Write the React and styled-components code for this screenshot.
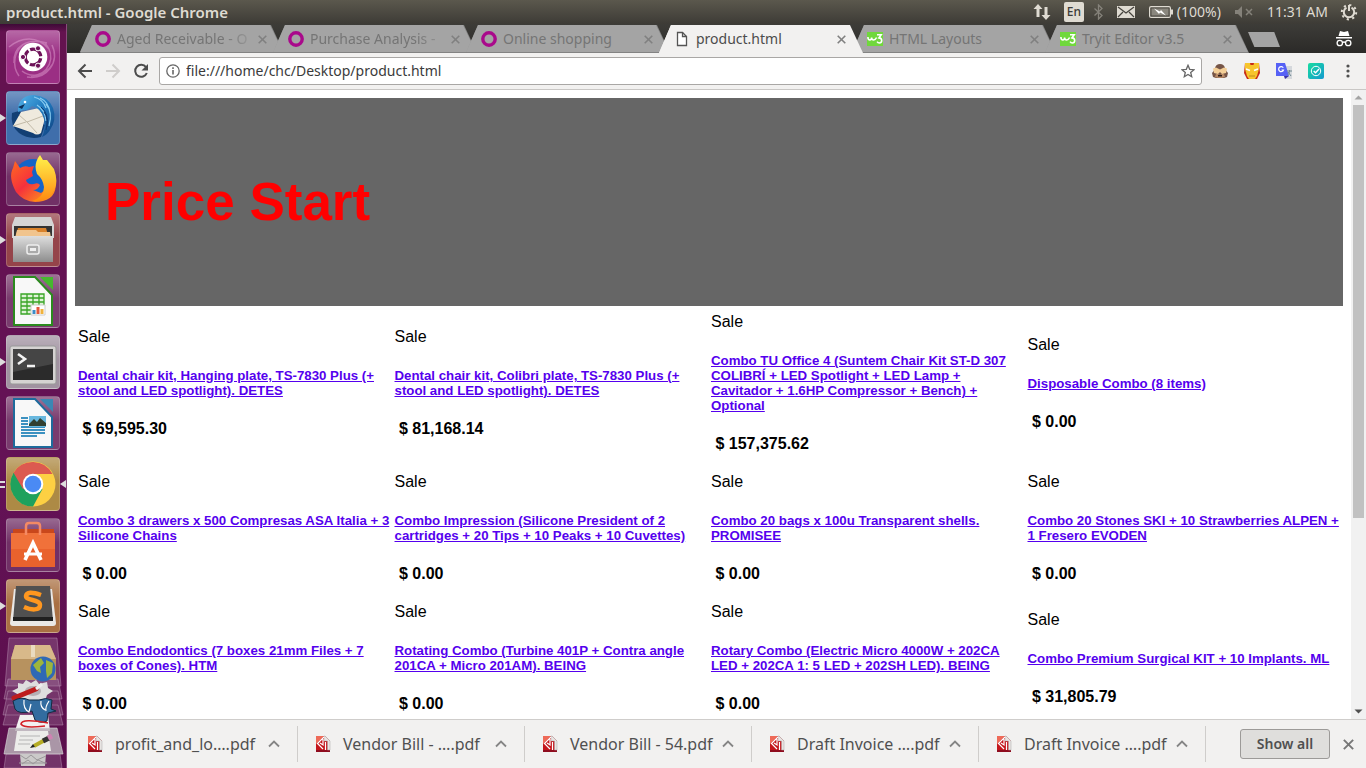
import React from "react";
import styled, { createGlobalStyle, css } from "styled-components";

const Global = createGlobalStyle`
  * { box-sizing: border-box; }
  html, body, #root { margin: 0; height: 100%; }
  body { font-family: "Noto Sans", "Open Sans", sans-serif; background: #fff; overflow: hidden; }
  button { font: inherit; color: inherit; background: none; border: 0; padding: 0; margin: 0; display: flex; }
  svg { display: block; flex: none; }
`;

const ui = `"Noto Sans", "Open Sans", sans-serif`;

/* ---------- desktop shell ---------- */

const Desktop = styled.div`
  display: flex;
  flex-direction: column;
  height: 100vh;
`;

const Panel = styled.header`
  flex: 0 0 24px;
  display: flex;
  align-items: center;
  justify-content: space-between;
  padding: 0 8px 0 6px;
  color: #dfdbd2;
  background: linear-gradient(#5b584d, #3d3b36);
  font: 14px/24px ${ui};
`;

const WindowTitle = styled.div`
  font-size: 15px;
  font-weight: 600;
`;

const Indicators = styled.div`
  display: flex;
  align-items: center;
`;

const Indicator = styled.button`
  align-items: center;
  gap: 4px;
  margin-left: ${(p) => p.$gap || 14}px;
`;

const Keyboard = styled.span`
  width: 20px;
  height: 20px;
  border-radius: 2px;
  background: #dfdbd2;
  color: #3c3b37;
  text-align: center;
  font-size: 12px;
  font-weight: 500;
  line-height: 20px;
`;

const Work = styled.div`
  flex: 1;
  min-height: 0;
  display: flex;
`;

const Launcher = styled.nav`
  flex: 0 0 67px;
  display: flex;
  flex-direction: column;
  align-items: center;
  gap: 7px;
  padding: 6px 1px 0 0;
  overflow: hidden;
  background: linear-gradient(#3e0a37, #64124f 8px, #641256 60%, #5a0f4c);
  border-right: 1px solid #8a4a7c;
`;

const LaunchItem = styled.div`
  position: relative;
  flex: none;
  width: 66px;
  padding-left: 6px;
`;

const LaunchButton = styled.button`
  width: 54px;
  height: 54px;
  border-radius: 4px;
  border: 1px solid rgba(255, 255, 255, 0.18);
  background: ${(p) => p.$bg};
  align-items: center;
  justify-content: center;
  overflow: hidden;
`;

const Marker = styled.span`
  position: absolute;
  top: 23px;
  border: 4px solid transparent;
  ${(p) =>
    p.$side === "right"
      ? css`right: 0; border-right: 6px solid #ddd; border-left: 0;`
      : css`left: 0; border-left: 6px solid #ddd; border-right: 0;`}
`;

const Pips = styled.span`
  position: absolute;
  left: 0;
  top: 24px;
  width: 5px;
  height: 7px;
  border: solid #ddd;
  border-width: 2px 0;
`;

const StackArt = styled.svg`
  overflow: visible;
`;

/* ---------- browser ---------- */

const Browser = styled.main`
  flex: 1;
  min-width: 0;
  display: flex;
  flex-direction: column;
`;

const TabStrip = styled.div`
  flex: 0 0 29px;
  display: flex;
  padding: 1px 13px 0 13px;
  background: linear-gradient(#3d3c38, #2b2a28);
`;

const Tab = styled.div`
  position: relative;
  flex: 0 1 204px;
  min-width: 0;
  margin-right: -11px;
  padding: 0 17px 0 15px;
  display: flex;
  align-items: center;
  z-index: ${(p) => (p.$active ? 2 : 1)};
  color: ${(p) => (p.$active ? "#4c4c4c" : "#757575")};
  font: 14px/28px ${ui};
  &::before, &::after {
    content: "";
    position: absolute;
    inset: 0;
    z-index: -1;
    clip-path: polygon(0 100%, 12px 0, calc(100% - 13px) 0, 100% 100%);
    background: ${(p) => (p.$active ? "#f2f1f0" : "#838383")};
  }
  &::after {
    right: 1px;
    bottom: ${(p) => (p.$active ? 0 : 1)}px;
    background: ${(p) => (p.$active ? "#f2f1f0" : "#a4a4a4")};
  }
`;

const TabTitle = styled.span`
  flex: 1;
  margin: 0 8px 0 6px;
  white-space: nowrap;
  ${(p) => p.$fade && css`mask-image: linear-gradient(90deg, #000 80%, rgba(0, 0, 0, 0.25));`}
`;

const NewTab = styled.button`
  width: 32px;
  height: 15px;
  margin: 7px auto 0 10px;
  clip-path: polygon(0 0, 82% 0, 100% 100%, 20% 100%);
  background: #a4a4a4;
`;

const Incognito = styled.div`
  align-self: center;
`;

const Toolbar = styled.div`
  flex: 0 0 37px;
  display: flex;
  align-items: center;
  gap: 10px;
  padding: 0 10px;
  background: #f2f1f0;
  border-bottom: 1px solid #c9c7c5;
`;

const NavButtons = styled.div`
  display: flex;
  gap: 12px;
`;

const Address = styled.label`
  flex: 1;
  display: flex;
  align-items: center;
  gap: 6px;
  height: 28px;
  padding: 0 6px;
  border: 1px solid #a9a7a5;
  border-radius: 3px;
  background: #fff;
`;

const UrlInput = styled.input`
  flex: 1;
  min-width: 0;
  padding: 0;
  border: 0;
  outline: 0;
  background: none;
  color: #3b3b3b;
  font: 14px/20px ${ui};
`;

const Extensions = styled.div`
  display: flex;
  align-items: center;
  gap: 16px;
`;

const Viewport = styled.div`
  flex: 1;
  min-height: 0;
  display: flex;
  background: #fff;
`;

const Scroller = styled.div`
  flex: 1;
  min-width: 0;
  overflow-y: auto;
  scrollbar-width: none;
  padding: 8px;
  color: #000;
  font: 16px/18px "Liberation Sans", Arial, sans-serif;
`;

const Scrollbar = styled.div`
  flex: 0 0 15px;
  display: flex;
  flex-direction: column;
  align-items: center;
  background: #f1f1f1;
`;

const ScrollArrow = styled.button`
  flex: 0 0 15px;
  align-items: center;
`;

const Track = styled.div`
  flex: 1;
`;

const Thumb = styled.div`
  width: 11px;
  height: 69%;
  background: #c1c1c1;
`;

/* ---------- web page ---------- */

const Banner = styled.section`
  display: flex;
  align-items: center;
  height: 208px;
  margin-bottom: 2px;
  padding: 0 30px;
  background: #666;
`;

const BannerTitle = styled.h1`
  margin: 0;
  color: #f00;
  font-size: 53px;
  line-height: 62px;
`;

const Products = styled.table`
  width: 100%;
  table-layout: fixed;
  border-spacing: 2px;
`;

const Cell = styled.td`
  padding: 3px 1px 15px;
  vertical-align: middle;
`;

const ProductName = styled.h5`
  margin: 22px 0;
  line-height: 15px;
`;

const ProductLink = styled.a`
  color: #50e;
`;

const Price = styled.b`
  display: block;
  white-space: pre;
`;

/* ---------- download shelf ---------- */

const Shelf = styled.footer`
  flex: 0 0 49px;
  display: flex;
  align-items: center;
  padding-right: 12px;
  background: #f2f1f0;
  border-top: 1px solid #cfcdcb;
  color: #505050;
`;

const Download = styled.div`
  flex: 0 1 227px;
  min-width: 0;
  display: flex;
  align-items: center;
  height: 36px;
  padding: 0 17px;
  border-right: 1px solid #cfcdcb;
  font: 16px/36px ${ui};
  &:first-child { flex-basis: 231px; padding-left: 20px; }
`;

const FileName = styled.span`
  flex: 1;
  min-width: 0;
  margin-left: 12px;
  white-space: nowrap;
`;

const ShowAll = styled.button`
  width: 90px;
  height: 30px;
  margin: 0 13px 0 auto;
  align-items: center;
  justify-content: center;
  border: 1px solid #9c9a98;
  border-radius: 3px;
  background: #dfdedc;
  font: 600 14px/20px ${ui};
`;

/* ---------- small icons ---------- */

const Cross = ({ size = 9, color = "#808080", w = 1.6 }) => (
  <svg width={size} height={size} viewBox="0 0 9 9" fill="none" stroke={color} strokeWidth={w}>
    <path d="M.7.7l7.6 7.6M8.3.7L.7 8.3" />
  </svg>
);

const Favicon = ({ kind }) => {
  if (kind === "odoo")
    return (
      <svg width="16" height="16" viewBox="0 0 16 16">
        <circle cx="8" cy="8" r="6.2" fill="none" stroke="#a9098b" strokeWidth="3.4" />
      </svg>
    );
  if (kind === "file")
    return (
      <svg width="16" height="16" viewBox="0 0 16 16" fill="#fff" stroke="#555" strokeWidth="1.3">
        <path d="M3.5 1.5h5l4 4v9h-9z" />
        <path d="M8.5 1.5v4h4" fill="none" />
      </svg>
    );
  return (
    <svg width="16" height="16" viewBox="0 0 16 16" fill="none" stroke="#fff" strokeWidth="1.600">
      <path d="M0 1h16v14H0z" fill="#70d83c" stroke="none" />
      <path d="M.9 6c0 2 .8 3 2 3s1.700-1 1.700-2.500C4.600 8 5.400 9 6.600 9s2.200-.8 3-2.500" />
      <path d="M10 3.800h4.200L12 6.900q2.700.2 2.700 2.600T12.300 12q-1.500 0-2.200-1.300" />
    </svg>
  );
};

const PdfIcon = () => (
  <svg width="16" height="18" viewBox="0 0 16 18">
    <path d="M1 1h9l5 5v11H1z" fill="#c4161c" />
    <path d="M1 1h8L1 9z" fill="#ee6a58" />
    <path d="M11 15h4v2H1v-2z" fill="#8f0c1e" />
    <path d="M9 1h1l5 5v9h-2.500V6H9z" fill="#e8e4e2" stroke="#aaa" strokeWidth=".5" />
    <path d="M9 2L2.500 8.500 8 14M8 4v6l-3-2M10.500 7v8" fill="none" stroke="#fff" strokeWidth="1.200" />
  </svg>
);

const Chevron = () => (
  <svg width="12" height="8" viewBox="0 0 12 8" fill="none" stroke="#858585" strokeWidth="1.800">
    <path d="M1 6.500l5-5 5 5" />
  </svg>
);

const Triangle = ({ down }) => (
  <svg width="9" height="5" viewBox="0 0 9 5">
    <path d={down ? "M.5.5h8l-4 4z" : "M.5 4.500h8l-4-4z"} fill={down ? "#505050" : "#a3a3a3"} />
  </svg>
);

/* ---------- launcher icons ---------- */

const Ubuntu = () => (
  <svg width="52" height="52" viewBox="0 0 52 52" fill="none">
    <g stroke="#e6a9d8" strokeOpacity=".45" strokeWidth="1.500">
      <path d="M7 32C6 16 20 6 40 12M2 16C14 6 30 4 42 18M12 45C4 34 8 20 16 14M45 14c8 17-5 35-25 32M38 12c12 14 4 32-14 33M15 40c10 8 24 4 30-6" />
    </g>
    <circle cx="26" cy="26" r="14.300" fill="#fff" />
    <circle cx="26" cy="26" r="7.800" stroke="#6d1259" strokeWidth="3.200" strokeDasharray="14.300 2.040" strokeDashoffset="7.150" transform="rotate(60 26 26)" />
    <g fill="#6d1259" stroke="#fff" strokeWidth="1">
      <circle cx="16" cy="26" r="2.600" />
      <circle cx="31" cy="17.300" r="2.600" />
      <circle cx="31" cy="34.700" r="2.600" />
    </g>
  </svg>
);

const Thunderbird = () => (
  <svg width="52" height="52" viewBox="0 0 52 52">
    <defs>
      <linearGradient id="wing" x1="0" y1="0" x2="1" y2="1">
        <stop offset="0" stopColor="#55b5ea" />
        <stop offset=".5" stopColor="#1f78bd" />
        <stop offset="1" stopColor="#0f3f7c" />
      </linearGradient>
    </defs>
    <path d="M5 21Q3 34 12 41q10 7 22 4l4-12-26-14z" fill="#123f74" />
    <path d="M6 34l8-14 18-4 6 10-4 15q-4 3-8 0z" fill="#efeade" />
    <path d="M12 23l8 7 16-6M6 34l13-4M20 30l10 11" fill="none" stroke="#c2baa8" />
    <path d="M11 15Q14 3 27 3q14 1 19 13 4 12-3 22-3 5-8 7 4-9 2-18-3-11-12-13-4 5-9 4l-5 2z" fill="url(#wing)" />
    <path d="M27 5q9 2 12 11M33 6q9 4 10 15M30 13q8 5 9 16M39 12q7 8 3 22" fill="none" stroke="#8accf0" strokeWidth="1.200" />
    <path d="M34 15q8 6 6 20M37 20q5 6 2 18" fill="none" stroke="#0d3a72" strokeWidth="1" />
    <path d="M11 15l7-3-3 5z" fill="#0e3058" />
    <circle cx="18" cy="10" r="1.300" fill="#fff" />
  </svg>
);

const Firefox = () => (
  <svg width="52" height="52" viewBox="0 0 52 52">
    <defs>
      <linearGradient id="fox" x1="0" y1="0" x2="1" y2="1">
        <stop offset="0" stopColor="#ff6a20" />
        <stop offset=".45" stopColor="#f5313d" />
        <stop offset="1" stopColor="#ffae12" />
      </linearGradient>
      <linearGradient id="tail" x1="0" y1="0" x2="0" y2="1">
        <stop offset="0" stopColor="#fff34c" />
        <stop offset="1" stopColor="#ff8a10" />
      </linearGradient>
    </defs>
    <circle cx="26" cy="25" r="19" fill="#1464c8" />
    <path d="M8 8l5 7q5-3 9-1l5-1-2 6 1 4-7 4q1 5 8 4 4-2 6 1-2 5-7 5l8 3 10-8 4-8q4 20-12 24-17 4-27-9-8-15-3-24z" fill="url(#fox)" />
    <path d="M33 2l3 5 4 0 7 9q6 16-3 26-7 7-19 6 12-4 12-14-1-8-7-13-4-10 3-19z" fill="url(#tail)" />
  </svg>
);

const Files = () => (
  <svg width="52" height="52" viewBox="0 0 52 52">
    <defs>
      <linearGradient id="steel" x1="0" y1="0" x2="0" y2="1">
        <stop offset="0" stopColor="#dedede" />
        <stop offset="1" stopColor="#8d8d8d" />
      </linearGradient>
    </defs>
    <path d="M8 3h36l3 8v13H5V11z" fill="#d5d5d5" />
    <path d="M7 12h38v14H7z" fill="#343434" />
    <path d="M11 14h28l2 7H9z" fill="#d9822b" />
    <path d="M10 16h19l2 2h12l1 6H8z" fill="#f1c48d" />
    <path d="M6 22h40v26H6z" fill="url(#steel)" />
    <rect x="20" y="31" width="12" height="9" rx="2" fill="#aaa" stroke="#eee" strokeWidth="1.500" />
    <path d="M23 34h6v3h-6z" fill="#eee" />
  </svg>
);

const Sheet = ({ writer }) => {
  const c = writer ? "#1e6b9c" : "#2b8a1e";
  return (
    <svg width="52" height="52" viewBox="0 0 52 52">
      <path d="M7 2h21l17 18v30H7z" fill="#f8f8f8" stroke={c} strokeWidth="2" />
      <path d="M33 2h13v13z" fill={writer ? "#3b87b3" : "#46b82e"} />
      {writer ? (
        <g>
          <path d="M14 21h7M14 24h7M14 27h7M14 30h24M14 33h24M14 36h24M14 39h16" stroke="#3c91c0" strokeWidth="2" />
          <path d="M22 19h17v11H22z" fill="#69b8df" />
          <path d="M22 27l5-5 3 3 3-4 6 5v3H22z" fill="#314031" />
        </g>
      ) : (
        <g>
          <path d="M14 19h23v20H14z" fill="#dff2d8" />
          <path d="M14 19h23v20H14zM14 23h23M14 27h23M14 31h23M14 35h23M20 19v20M26 19v20M32 19v20" fill="none" stroke="#38a526" strokeWidth="1.300" />
          <path d="M24 30h14v10H24z" fill="#fff" stroke="#ccc" />
          <path d="M27 39v-4" stroke="#3b8bc7" strokeWidth="3" />
          <path d="M31 39v-7" stroke="#e2583d" strokeWidth="3" />
          <path d="M35 39v-5" stroke="#f0b23c" strokeWidth="3" />
        </g>
      )}
    </svg>
  );
};

const Terminal = () => (
  <svg width="52" height="52" viewBox="0 0 52 52">
    <rect x="3" y="10" width="46" height="38" rx="2" fill="#d5d3d2" stroke="#999" />
    <path d="M6 13h40v31H6z" fill="#2b2b2b" />
    <path d="M6 13h40v15L6 36z" fill="#454545" />
    <path d="M11 18l7 5-7 5M20 30h8" fill="none" stroke="#f2f2f2" strokeWidth="2.600" />
  </svg>
);

const Chrome = () => (
  <svg width="52" height="52" viewBox="0 0 52 52">
    <circle cx="26" cy="26" r="22.500" fill="#fdd043" />
    <path d="M26 26L6.500 14.700A22.500 22.500 0 0 0 26 48.500L35.500 31z" fill="#1fa15d" />
    <path d="M26 26L16 31 6.500 14.700A22.500 22.500 0 0 1 45.500 16H26z" fill="#dc5a50" />
    <circle cx="26" cy="26" r="10.300" fill="#fff" />
    <circle cx="26" cy="26" r="8.300" fill="#4a8af4" />
  </svg>
);

const Software = () => (
  <svg width="52" height="52" viewBox="0 0 52 52" fill="none">
    <path d="M6 10h41v6H6z" fill="#c9471c" />
    <path d="M4 14h44v34H4z" fill="#f0713a" />
    <path d="M4 30h44v18H4z" fill="#e9622d" />
    <path d="M19 16V7q0-3 3-3h8q3 0 3 3v9" stroke="#f48a64" strokeWidth="2.500" />
    <path d="M18 41l8-17 8 17" stroke="#fff" strokeWidth="3.600" />
    <path d="M17 35h18" stroke="#fff" strokeWidth="3" />
  </svg>
);

const Sublime = () => (
  <svg width="52" height="52" viewBox="0 0 52 52">
    <path d="M7 9h38l4 34q0 3-3 3H6q-3 0-3-3z" fill="#e9e7e5" />
    <path d="M9 6h34l3 35H6z" fill="#505050" />
    <path d="M6 37h40v4H6z" fill="#202020" />
    <path d="M34 15q-14-5-15 1c0 5 14 3 14 9s-9 5-16 2" fill="none" stroke="#ff971f" strokeWidth="4.500" />
  </svg>
);

const Stack = () => (
  <StackArt width="66" height="131" viewBox="0 3 66 131">
    <g fill="#b18bab" fillOpacity=".3" stroke="#c7a8c2" strokeOpacity=".4">
      <path d="M9 1h48l4 48H5z" />
      <path d="M8 42h50l4 20H4zM8 54h50l5 24H3zM8 68h50l5 20H3zM6 117h54l2 14H4z" />
    </g>
    <path d="M15 8h35l6 14v21H11V22z" fill="#b7925f" />
    <path d="M15 8h35l6 14H11z" fill="#d8b98a" />
    <path d="M31 8h4v12h-4z" fill="#eadbc0" />
    <circle cx="43" cy="32" r="12.500" fill="#2f69b5" />
    <path d="M33 28l8-7 3 5-4 4 1 6-4-2zM46 23l7 3-1 10-5 5-1-7z" fill="#9db53c" />
    <path d="M18 46l5 1 3-4 5 3 5-3 3 4 8-2 1 6 5 3-6 4-2 6H21l-2-6-7-4 6-3z" fill="#dedede" />
    <ellipse cx="33" cy="54" rx="8" ry="5" fill="#b5b0b4" />
    <path d="M14 61l22-9" stroke="#be1d1d" strokeWidth="5" strokeLinecap="round" />
    <path d="M36 52l6-5" stroke="#eee" strokeWidth="3" />
    <path d="M20 78h28l2 16H15z" fill="#f2f0f0" />
    <path d="M13 64q8-5 16-1l10 0q7-3 13 0l-1 9 5 2-8 2-1 8q-7 3-12-1l-3-9q-13 4-17-2z" fill="#326c9f" stroke="#132c43" />
    <path d="M24 63q-1 9 5 12l2-8M41 64q-1 6 4 9M49 64q-4 6-3 10" fill="none" stroke="#fff" strokeWidth="1.200" />
    <path d="M48 86q-26-5-27 1 3 5 24 2" fill="none" stroke="#d42026" strokeWidth="1.600" />
    <path d="M9 91h48l6 26H4z" fill="#b9aeb7" fillOpacity=".85" stroke="#ddd" strokeOpacity=".6" />
    <path d="M17 94h31l3 20H14z" fill="#ececea" />
    <path d="M20 99h20M19 103h14M18 107h12" stroke="#b4b4b4" />
    <path d="M34 109l11-6" stroke="#b6ad25" strokeWidth="4" />
    <path d="M43 104l6-3" stroke="#333" strokeWidth="5" />
    <path d="M48 101l4-2" stroke="#cf82b2" strokeWidth="5" />
    <path d="M30 111l5-1-2-3z" fill="#222" />
    <path d="M20 117h26l-1 12H21z" fill="#cbcac9" />
    <path d="M20 118l6 4 5-4 6 5 9-4M22 127l6-4 5 4 5-4 7 3M19 126h28" fill="none" stroke="#9a9799" />
  </StackArt>
);

/* ---------- data ---------- */

const gloss = (c) => `linear-gradient(rgba(255,255,255,.3), rgba(255,255,255,.04) 45%, rgba(255,255,255,.04)), ${c}`;

const launchers = [
  { name: "Dash", icon: <Ubuntu />, bg: gloss("#97277f") },
  { name: "Thunderbird", icon: <Thunderbird />, bg: gloss("#3768a8"), open: true },
  { name: "Firefox", icon: <Firefox />, bg: gloss("#6b2860") },
  { name: "Files", icon: <Files />, bg: gloss("#913c43"), open: true },
  { name: "Calc", icon: <Sheet />, bg: gloss("#743468") },
  { name: "Terminal", icon: <Terminal />, bg: gloss("#9d8e9d"), open: true },
  { name: "Writer", icon: <Sheet writer />, bg: gloss("#743468") },
  { name: "Chrome", icon: <Chrome />, bg: gloss("#aa853d"), current: true },
  { name: "Software", icon: <Software />, bg: gloss("#6b2860") },
  { name: "Sublime Text", icon: <Sublime />, bg: gloss("#a66a3b"), open: true },
];

const tabs = [
  { title: "Aged Receivable - O", kind: "odoo", fade: true },
  { title: "Purchase Analysis -", kind: "odoo", fade: true },
  { title: "Online shopping", kind: "odoo" },
  { title: "product.html", kind: "file", active: true },
  { title: "HTML Layouts", kind: "w3" },
  { title: "Tryit Editor v3.5", kind: "w3" },
];

const rows = [
  [
    ["Dental chair kit, Hanging plate, TS-7830 Plus (+ stool and LED spotlight). DETES", "69,595.30"],
    ["Dental chair kit, Colibri plate, TS-7830 Plus (+ stool and LED spotlight). DETES", "81,168.14"],
    ["Combo TU Office 4 (Suntem Chair Kit ST-D 307 COLIBRÍ + LED Spotlight + LED Lamp + Cavitador + 1.6HP Compressor + Bench) + Optional", "157,375.62"],
    ["Disposable Combo (8 items)", "0.00"],
  ],
  [
    ["Combo 3 drawers x 500 Compresas ASA Italia + 3 Silicone Chains", "0.00"],
    ["Combo Impression (Silicone President of 2 cartridges + 20 Tips + 10 Peaks + 10 Cuvettes)", "0.00"],
    ["Combo 20 bags x 100u Transparent shells. PROMISEE", "0.00"],
    ["Combo 20 Stones SKI + 10 Strawberries ALPEN + 1 Fresero EVODEN", "0.00"],
  ],
  [
    ["Combo Endodontics (7 boxes 21mm Files + 7 boxes of Cones). HTM", "0.00"],
    ["Rotating Combo (Turbine 401P + Contra angle 201CA + Micro 201AM). BEING", "0.00"],
    ["Rotary Combo (Electric Micro 4000W + 202CA LED + 202CA 1: 5 LED + 202SH LED). BEING", "0.00"],
    ["Combo Premium Surgical KIT + 10 Implants. ML", "31,805.79"],
  ],
];

const downloads = [
  "profit_and_lo….pdf",
  "Vendor Bill - ….pdf",
  "Vendor Bill - 54.pdf",
  "Draft Invoice ….pdf",
  "Draft Invoice ….pdf",
];

/* ---------- sections ---------- */

const TopPanel = () => (
  <Panel>
    <WindowTitle>product.html - Google Chrome</WindowTitle>
    <Indicators>
      <Indicator aria-label="Network">
        <svg width="18" height="18" viewBox="0 0 18 18" fill="#dfdbd2">
          <path d="M5 1l4.500 5H6.500v8h-3V6H.5zM13 17l4.500-5h-3V4h-3v8h-3z" />
        </svg>
      </Indicator>
      <Indicator $gap={13} aria-label="Keyboard layout">
        <Keyboard>En</Keyboard>
      </Indicator>
      <Indicator $gap={10} aria-label="Bluetooth">
        <svg width="9" height="16" viewBox="0 0 9 16" fill="none" stroke="#85827a" strokeWidth="1.300">
          <path d="M.5 4.500l7.500 7-3.500 3.500V1L8 4.500l-7.500 7" />
        </svg>
      </Indicator>
      <Indicator aria-label="Messages">
        <svg width="18" height="12" viewBox="0 0 18 12">
          <path d="M0 0h18v12H0z" fill="#dfdbd2" />
          <path d="M1 1l8 6 8-6M1 11l5-5M17 11l-5-5" fill="none" stroke="#45433d" strokeWidth="1.200" />
        </svg>
      </Indicator>
      <Indicator>
        <svg width="24" height="12" viewBox="0 0 24 12">
          <rect x=".6" y=".6" width="20.800" height="10.800" rx="1.500" fill="none" stroke="#dfdbd2" strokeWidth="1.200" />
          <path d="M2.500 2.500h17v7h-17z" fill="#8a877e" />
          <path d="M22 3.500h2v5h-2z" fill="#dfdbd2" />
          <path d="M5 2.500l6 3 1-1.500 5 5.500-6-3-1 1.500z" fill="#fff" />
        </svg>
        (100%)
      </Indicator>
      <Indicator aria-label="Sound muted">
        <svg width="18" height="12" viewBox="0 0 18 12" fill="#85827a">
          <path d="M0 4h3l4-4v12L3 8H0z" />
          <path d="M11 3l6 6M17 3l-6 6" stroke="#85827a" strokeWidth="1.500" />
        </svg>
      </Indicator>
      <Indicator>11:31 AM</Indicator>
      <Indicator $gap={12} aria-label="Session">
        <svg width="18" height="18" viewBox="0 0 18 18" fill="none" stroke="#dfdbd2">
          <path d="M6.500 4.600a5.200 5.200 0 1 0 5 0M9 2v6" strokeWidth="2" />
          <circle cx="9" cy="9.200" r="7.200" strokeWidth="2" strokeDasharray="2.200 3.450" />
        </svg>
      </Indicator>
    </Indicators>
  </Panel>
);

const Side = () => (
  <Launcher aria-label="Launcher">
    {launchers.map((l) => (
      <LaunchItem key={l.name}>
        {l.open && <Marker />}
        {l.current && <Pips />}
        {l.current && <Marker $side="right" />}
        <LaunchButton $bg={l.bg} aria-label={l.name}>{l.icon}</LaunchButton>
      </LaunchItem>
    ))}
    <Stack />
  </Launcher>
);

const ExtensionIcons = () => (
  <Extensions>
    <button aria-label="Monkey">
      <svg width="16" height="16" viewBox="0 0 16 16">
        <path d="M3 5q1-4 5-4t5 4q1 3 3 5l-1 4-3 1H4l-3-1-1-4q2-2 3-5z" fill="#765547" />
        <path d="M4 11h8l1 3q-5 2-10 0z" fill="#b98a66" />
        <path d="M1 5.500l3-1 4 2 4-2 3 1-1 4.500-4 1-2-2-2 2-4-1z" fill="#f4cf97" />
        <path d="M6 12q2-1 4 0v1.500H6z" fill="#2c1c18" />
      </svg>
    </button>
    <button aria-label="Iron mask">
      <svg width="16" height="16" viewBox="0 0 16 16">
        <path d="M1 0h14l1 10-3 6H3l-3-6z" fill="#c72b17" />
        <path d="M1 0h5l.5 2h3L10 0h5v6l-2 7-2 3H5l-2-3-2-7z" fill="#f7c52c" />
        <path d="M2 6l4 1.500M14 6l-4 1.500" stroke="#fff" strokeWidth="1.500" />
        <path d="M5 13h6" stroke="#c08d1c" />
      </svg>
    </button>
    <button aria-label="Translate">
      <svg width="16" height="16" viewBox="0 0 16 16">
        <path d="M6 3h10v13H9z" fill="#d5d8dc" />
        <path d="M0 0h9l4 13H0z" fill="#5661f5" />
        <path d="M8 13h5l-4 3z" fill="#3730a8" />
        <path d="M7.300 4.800A2.500 2.500 0 1 0 7.500 7H5.500" fill="none" stroke="#fff" strokeWidth="1.200" />
        <path d="M11 8h5M13.500 7v1q0 3-2 4M12 9l3 4" fill="none" stroke="#6e8790" />
      </svg>
    </button>
    <button aria-label="Checker">
      <svg width="16" height="16" viewBox="0 0 16 16" fill="none" stroke="#fff">
        <defs>
          <linearGradient id="teal" x1="0" y1="0" x2="1" y2="1">
            <stop offset="0" stopColor="#19dda0" />
            <stop offset="1" stopColor="#1499cf" />
          </linearGradient>
        </defs>
        <rect width="16" height="16" rx="2" fill="url(#teal)" stroke="none" />
        <circle cx="8" cy="8" r="4.700" />
        <path d="M5.700 8l1.800 1.800 3.500-3.800" strokeWidth="1.400" />
      </svg>
    </button>
    <button aria-label="Menu">
      <svg width="16" height="16" viewBox="0 0 16 16" fill="#4f4f4f">
        <circle cx="8" cy="3" r="1.600" />
        <circle cx="8" cy="8" r="1.600" />
        <circle cx="8" cy="13" r="1.600" />
      </svg>
    </button>
  </Extensions>
);

export default function App() {
  return (
    <Desktop>
      <Global />
      <TopPanel />
      <Work>
        <Side />
        <Browser>
          <TabStrip>
            {tabs.map((t) => (
              <Tab key={t.title} $active={t.active}>
                <Favicon kind={t.kind} />
                <TabTitle $fade={t.fade}>{t.title}</TabTitle>
                <button aria-label="Close tab"><Cross /></button>
              </Tab>
            ))}
            <NewTab aria-label="New tab" />
            <Incognito>
              <svg width="18" height="18" viewBox="0 0 18 18" fill="#fff">
                <path d="M5 1l4 1 4-1 1.500 5h-11zM1 7h16v1.500H1z" />
                <g fill="none" stroke="#fff" strokeWidth="1.300">
                  <circle cx="4.800" cy="13" r="2.700" />
                  <circle cx="13.200" cy="13" r="2.700" />
                  <path d="M7.500 12.500q1.500-1 3 0" />
                </g>
              </svg>
            </Incognito>
          </TabStrip>
          <Toolbar>
            <NavButtons>
              <button aria-label="Back">
                <svg width="16" height="16" viewBox="0 0 16 16" fill="none" stroke="#4c4c4c" strokeWidth="2">
                  <path d="M15 8H2M8.500 1.500L2 8l6.500 6.500" />
                </svg>
              </button>
              <button aria-label="Forward">
                <svg width="16" height="16" viewBox="0 0 16 16" fill="none" stroke="#cfcdcb" strokeWidth="2">
                  <path d="M1 8h13M7.500 1.500L14 8l-6.500 6.500" />
                </svg>
              </button>
              <button aria-label="Reload">
                <svg width="16" height="16" viewBox="0 0 16 16">
                  <path d="M13 4.200A6 6 0 1 0 13.800 10" fill="none" stroke="#4c4c4c" strokeWidth="2" />
                  <path d="M15 1v6.500H8.500z" fill="#4c4c4c" />
                </svg>
              </button>
            </NavButtons>
            <Address>
              <svg width="14" height="14" viewBox="0 0 14 14" fill="none" stroke="#666">
                <circle cx="7" cy="7" r="6.200" strokeWidth="1.300" />
                <path d="M7 6v4.500M7 3.300V5" strokeWidth="1.600" />
              </svg>
              <UrlInput aria-label="Address" defaultValue="file:///home/chc/Desktop/product.html" />
              <button aria-label="Bookmark">
                <svg width="14" height="14" viewBox="0 0 14 14" fill="none" stroke="#666" strokeWidth="1.300">
                  <path d="M7 1.300l1.700 4 4.300.4-3.300 2.800 1 4.200L7 10.500l-3.700 2.200 1-4.200L1 5.700l4.300-.4z" />
                </svg>
              </button>
            </Address>
            <ExtensionIcons />
          </Toolbar>
          <Viewport>
            <Scroller>
              <Banner>
                <BannerTitle>Price Start</BannerTitle>
              </Banner>
              <Products>
                <tbody>
                  {rows.map((row, i) => (
                    <tr key={i}>
                      {row.map(([name, price]) => (
                        <Cell key={name}>
                          Sale
                          <ProductName>
                            <ProductLink href="#">{name}</ProductLink>
                          </ProductName>
                          <Price>{"\u00a0$ " + price}</Price>
                        </Cell>
                      ))}
                    </tr>
                  ))}
                </tbody>
              </Products>
            </Scroller>
            <Scrollbar>
              <ScrollArrow aria-label="Scroll up"><Triangle /></ScrollArrow>
              <Track><Thumb /></Track>
              <ScrollArrow aria-label="Scroll down"><Triangle down /></ScrollArrow>
            </Scrollbar>
          </Viewport>
          <Shelf>
            {downloads.map((d, i) => (
              <Download key={i}>
                <PdfIcon />
                <FileName>{d}</FileName>
                <button aria-label="Download options"><Chevron /></button>
              </Download>
            ))}
            <ShowAll>Show all</ShowAll>
            <button aria-label="Close downloads"><Cross size={11} color="#777" /></button>
          </Shelf>
        </Browser>
      </Work>
    </Desktop>
  );
}
